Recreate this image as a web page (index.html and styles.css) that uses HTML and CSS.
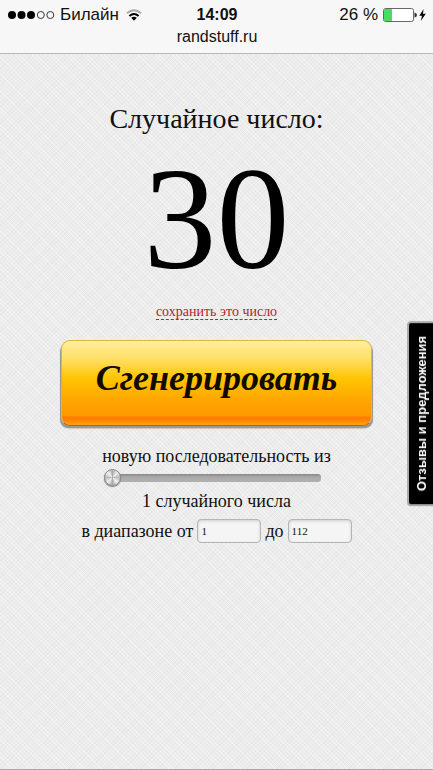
FILE: index.html
```html
<!DOCTYPE html>
<html lang="ru">
<head>
    <meta charset="UTF-8">
    <meta name="viewport" content="width=device-width, initial-scale=1.0">
    <title>Случайное число</title>
    <link rel="stylesheet" href="styles.css">
</head>
<body>
    <header class="browser-bar">
        <div class="status">
            <div class="carrier">
                <svg class="signal" width="47" height="10" viewBox="0 0 47 10">
                    <g fill="#000">
                        <circle cx="4" cy="5" r="4"/>
                        <circle cx="13.5" cy="5" r="4"/>
                        <circle cx="23" cy="5" r="4"/>
                    </g>
                    <g fill="none" stroke="#222" stroke-width="0.9">
                        <circle cx="32.8" cy="5" r="3.5"/>
                        <circle cx="42.3" cy="5" r="3.5"/>
                    </g>
                </svg>
                <span>Билайн</span>
                <svg class="wifi" width="16" height="12" viewBox="0 0 16 12">
                    <path d="M1 4.2 Q8 -1.8 15 4.2" fill="none" stroke="#aaa" stroke-width="2"/>
                    <path d="M3.4 6.9 Q8 3 12.6 6.9" fill="none" stroke="#000" stroke-width="2"/>
                    <path d="M5.2 8.8 Q8 6.6 10.8 8.8 L8 11.8 Z" fill="#000"/>
                </svg>
            </div>
            <div class="clock">14:09</div>
            <div class="power">
                <span>26 %</span>
                <svg class="battery" width="43" height="14" viewBox="0 0 43 14">
                    <rect x="0.5" y="0.5" width="30" height="13" rx="2" fill="#fff" stroke="#666"/>
                    <rect x="1" y="1" width="8" height="12" rx="1" fill="#4cd964"/>
                    <path d="M31.5 4.5 Q34 5 34 7 Q34 9 31.5 9.5 Z" fill="#333"/>
                    <path d="M40.6 1 L36.3 7.8 H39 L37.8 13 L42.8 5.8 H39.9 Z" fill="#000"/>
                </svg>
            </div>
        </div>
        <div class="address">randstuff.ru</div>
    </header>

    <main class="page">
        <h1>Случайное число:</h1>
        <div class="number">30</div>
        <a class="save" href="#">сохранить это число</a>

        <form class="generator">
            <button type="button" class="generate">Сгенерировать</button>
            <label for="count">новую последовательность из</label>
            <input type="range" id="count" class="slider" min="1" max="20" value="1">
            <div class="count">1 случайного числа</div>
            <div class="range">
                <label for="from">в диапазоне от</label>
                <input type="text" id="from" value="1">
                <label for="to">до</label>
                <input type="text" id="to" value="112">
            </div>
        </form>
    </main>

    <a class="feedback" href="#">Отзывы и предложения</a>
</body>
</html>
```

FILE: styles.css
```css
* {
    box-sizing: border-box;
}
body {
    margin: 0;
    min-height: 100vh;
    display: flex;
    flex-direction: column;
    font-family: "Liberation Serif", "Times New Roman", serif;
    font-size: 18px;
    color: #111;
    /* fine woven paper */
    background-color: #ececec;
    background-image:
        repeating-linear-gradient(45deg, rgba(255,255,255,0.3) 0 1px, transparent 1px 3px),
        repeating-linear-gradient(-45deg, rgba(0,0,0,0.02) 0 1px, transparent 1px 3px);
    border-bottom: 1px solid #aaa;
}

/* Top bar */
.browser-bar {
    height: 54px;
    padding: 5px 7px 0 8px;
    background-color: #f7f7f7;
    border-bottom: 1px solid #b8b8b8;
    font-family: "Liberation Sans", Arial, sans-serif;
    font-size: 16px;
    line-height: 20px;
}
.status {
    display: grid;
    grid-template-columns: 1fr auto 1fr;
    align-items: center;
}
.carrier, .power {
    display: flex;
    align-items: center;
    gap: 5px;
}
.carrier, .power {
    font-size: 17px;
}
.wifi {
    margin-left: 2px;
}
.power {
    justify-content: flex-end;
}
.clock {
    font-weight: bold;
}
.address {
    margin-top: 2px;
    text-align: center;
}

/* Content */
.page {
    display: flex;
    flex-direction: column;
    align-items: center;
    padding-top: 48px;
}
h1 {
    margin: 0;
    font-size: 28px;
    font-weight: normal;
    line-height: 34px;
}
.number {
    margin-top: 8px;
    font-size: 146px;
    line-height: 150px;
    color: #000;
}
.save {
    margin-top: 10px;
    font-size: 14px;
    line-height: 15px;
    color: #b5202b;
    text-decoration: none;
    border-bottom: 1px dashed #b5202b;
}
.generator {
    width: 100%;
    display: flex;
    flex-direction: column;
    align-items: center;
    line-height: 24px;
}
.generate {
    width: 72%;
    height: 86px;
    margin: 20px 0 18px;
    padding: 0 0 10px;
    border: 1px solid #dfb63c;
    border-bottom-color: #a86a18;
    border-radius: 9px;
    background: linear-gradient(#ffee9c, #ffe06a 20%, #ffc400 45%, #ffa600 70%, #ff9800 89%, #ff7900 91%, #ff8c00 96%, #ffa418);
    box-shadow: -2px 3px 0 -1px #999, 2px 3px 0 -1px #999, 0 2px 2px #777;
    font-family: "Liberation Serif", "Times New Roman", serif;
    font-size: 36px;
    font-style: italic;
    font-weight: bold;
    color: #120a00;
    cursor: pointer;
}

/* Slider */
.slider {
    -webkit-appearance: none;
    appearance: none;
    width: 50%;
    height: 18px;
    margin: 1px 8px 2px 0;
    background: none;
}
.slider::-webkit-slider-runnable-track {
    height: 8px;
    border-radius: 3px;
    background: linear-gradient(#888, #aaa 40%, #b0b0b0);
}
.slider::-webkit-slider-thumb {
    -webkit-appearance: none;
    width: 17px;
    height: 17px;
    margin-top: -5px;
    border: 1px solid #888;
    border-radius: 50%;
    background: conic-gradient(#aaa, #eee 12%, #bbb 25%, #f4f4f4 38%, #aaa 50%, #eee 62%, #bbb 75%, #f4f4f4 88%, #aaa);
    box-shadow: 0 1px 1px #777;
}
.count {
    margin-bottom: 6px;
}
.range {
    display: flex;
    align-items: center;
    gap: 4px;
}
.range input {
    width: 64px;
    height: 24px;
    padding: 0 3px;
    border: 1px solid #b5b5b5;
    border-radius: 4px;
    background-color: #f5f5f5;
    box-shadow: inset 0 1px 3px #ccc;
    font-family: inherit;
    font-size: 11px;
    color: #111;
}

/* Feedback tab over the right edge */
.feedback {
    position: fixed;
    right: 0;
    top: 321px;
    padding: 13px 5px 13px 3px;
    writing-mode: vertical-rl;
    transform: rotate(180deg);
    border: 2px solid #aaa;
    border-left: 0;
    border-radius: 0 4px 4px 0;
    background-color: #000;
    font-family: "Liberation Sans", Arial, sans-serif;
    font-size: 13px;
    font-weight: bold;
    line-height: 16px;
    color: #fff;
    text-decoration: none;
}
```
